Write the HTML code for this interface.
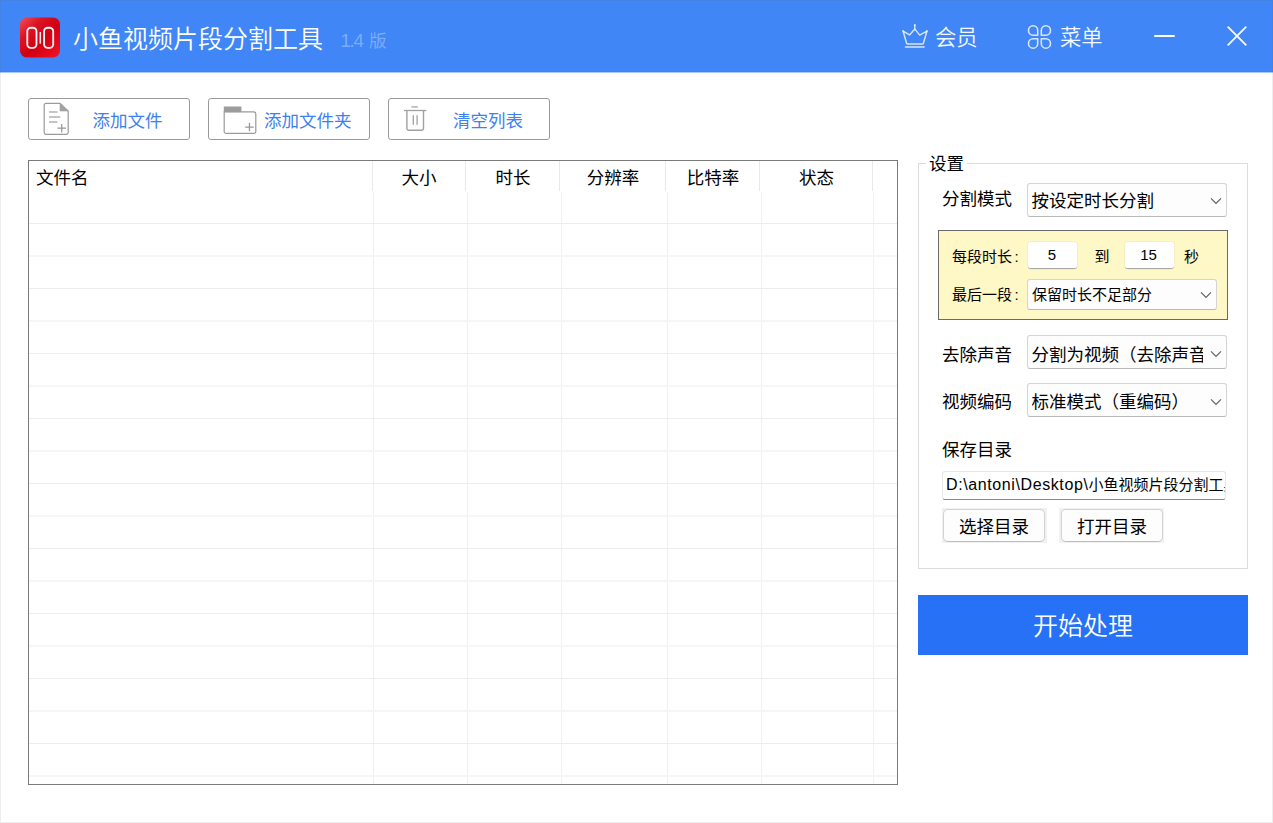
<!DOCTYPE html>
<html lang="zh-CN">
<head>
<meta charset="utf-8">
<title>小鱼视频片段分割工具</title>
<style>
html,body{margin:0;padding:0;}
body{width:1273px;height:823px;position:relative;overflow:hidden;background:#fff;
  font-family:"Liberation Sans","Noto Sans CJK SC",sans-serif;color:#000;}
.a{position:absolute;white-space:nowrap;}
svg{position:absolute;overflow:visible;}
/* window frame */
#frame{left:0;top:0;width:1271px;height:821px;border:1px solid rgba(100,100,100,.11);z-index:10;pointer-events:none;}
/* header */
#hdr{left:0;top:0;width:1273px;height:72px;background:#4086f6;}
#hdr .edge{left:0;top:71px;width:1273px;height:1px;background:#3c82f4;}
#hdr .edge2{left:0;top:72px;width:1273px;height:1px;background:#a9c8fb;}
#logo{left:20px;top:18px;transform:translateY(-.45px);width:40px;height:40px;border-radius:7px;
  background:linear-gradient(135deg,#f2505c 0%,#dc1424 28%,#d00012 55%,#e30a1c 80%,#f41426 100%);}
#title{left:73px;top:21px;height:36px;line-height:36px;font-size:25px;font-weight:350;color:#fff;}
#ver{left:340.5px;top:31px;height:20px;line-height:20px;font-size:17.6px;color:#7aacf9;}
#ver span{font-size:18.67px;letter-spacing:-1.3px;margin-right:6.5px;}
.hl{font-size:21.33px;font-weight:350;color:#f4f8ff;height:28px;line-height:28px;top:23.5px;}
/* toolbar */
.tb{top:97.6px;width:160px;height:40px;border:1px solid #9a9a9a;border-radius:3px;background:#fff;}
.tbt{top:106.5px;height:28px;line-height:28px;font-size:17.5px;color:#3d80f2;}
/* table */
#tbl{left:28px;top:160px;width:868px;height:623px;border:1px solid #7a7a7a;background:#fff;}
.th{top:164px;height:28px;line-height:28px;font-size:17.5px;color:#000;text-align:center;}
.hs{top:161px;width:1px;height:30px;background:#e9e9e9;}
.vs{top:192px;width:1px;height:592px;background:#f0f0f0;}
.rl{left:29px;width:868px;height:1px;background:#ededed;}
.rl.h{height:2px;background:#f6f6f6;}
/* settings */
#grp{left:918px;top:163px;width:328px;height:404px;border:1px solid #dcdcdc;}
#grpt{left:926px;top:150px;width:41px;height:28px;line-height:28px;font-size:17.5px;background:#fff;text-align:center;}
.lb{font-size:17.5px;height:28px;line-height:28px;left:942px;}
.cb{left:1027px;width:198px;height:32px;border:1px solid #d4d4d4;border-bottom-color:#b9b9b9;border-radius:3px;background:#fdfdfd;}
.ct{left:1031.5px;font-size:17.5px;height:28px;line-height:28px;overflow:hidden;}
#yb{left:938px;top:230px;width:288px;height:88px;border:1px solid #6a6a6a;background:#fef7c6;}
.sl{font-size:15px;height:24px;line-height:24px;}
.ni{top:241.5px;width:49px;height:26px;background:#fff;border-bottom:1px solid #a8a8a8;border-radius:3px;box-shadow:0 0 0 0.5px #ece6c0;}
.bt{top:509px;width:100px;height:31px;border:1px solid #d2d2d2;border-bottom-color:#bdbdbd;border-radius:5px;background:#fdfdfd;}
.btb{top:508px;width:105px;height:34.5px;background:#f1f1f1;}
.btt{top:513px;height:28px;line-height:28px;font-size:17.5px;width:102px;text-align:center;}
#start{left:918px;top:595px;width:330px;height:60px;background:#2671f5;}
#startt{left:918px;top:608px;width:330px;height:36px;line-height:36px;text-align:center;font-size:25px;font-weight:350;color:#fff;}
</style>
</head>
<body>
<div class="a" id="frame"></div>

<!-- ===== header ===== -->
<div class="a" id="hdr"><div class="a edge"></div><div class="a edge2"></div></div>
<div class="a" id="logo"></div>
<svg style="left:20px;top:17.55px" width="40" height="40" viewBox="0 0 40 40">
  <rect x="7.3" y="9.7" width="9.2" height="20.2" rx="3.6" fill="none" stroke="#fff" stroke-width="1.85" opacity=".95"/>
  <rect x="24.1" y="9.7" width="9.1" height="20.2" rx="3.6" fill="none" stroke="#fff" stroke-width="1.85" opacity=".95"/>
  <line x1="20.3" y1="14" x2="20.3" y2="25.7" stroke="#fff" stroke-width="1.6" opacity=".9"/>
</svg>
<div class="a" id="title">小鱼视频片段分割工具</div>
<div class="a" id="ver"><span>1.4</span>版</div>

<svg style="left:900px;top:22px" width="30" height="28" viewBox="0 0 30 28">
  <g fill="none" stroke="#fff" stroke-width="1.45" stroke-linejoin="round" stroke-linecap="round" opacity=".78">
    <path d="M3.1 9.2 L9.5 12.9 L14.8 6.9 L19.7 13.1 L26.9 9.2 L23.4 21.2 Q23.2 21.9 22.4 21.9 H7.6 Q6.8 21.9 6.6 21.2 Z"/>
    <path d="M14.8 2.9 V6.9"/>
    <path d="M5.4 24.9 H24.1"/>
  </g>
  <g fill="#fff" opacity=".55"><circle cx="3.1" cy="9.2" r="1.1"/><circle cx="26.9" cy="9.2" r="1.1"/><circle cx="14.8" cy="3.2" r="1.1"/></g>
</svg>
<div class="a hl" style="left:935px">会员</div>

<svg style="left:1026px;top:24px" width="28" height="26" viewBox="0 0 28 26">
  <g fill="none" stroke="#fff" stroke-width="1.6" stroke-linejoin="round" opacity=".8">
    <path d="M11.7 11.2 H7.1 A4.6 4.75 0 1 1 11.7 6.45 Z"/>
    <path d="M15.3 11.2 H19.9 A4.6 4.75 0 1 0 15.3 6.45 Z"/>
    <path d="M11.7 14.7 H7.1 A4.6 4.75 0 1 0 11.7 19.45 Z"/>
    <path d="M15.3 14.7 H19.9 A4.6 4.75 0 1 1 15.3 19.45 Z"/>
  </g>
</svg>
<div class="a hl" style="left:1060px">菜单</div>

<div class="a" style="left:1154px;top:35px;width:21px;height:2.4px;background:#fff;border-radius:1px"></div>
<svg style="left:1227px;top:26px" width="20" height="20" viewBox="0 0 20 20">
  <path d="M0.7 0.7 L19.3 19.3 M19.3 0.7 L0.7 19.3" stroke="#fff" stroke-width="1.9" fill="none" opacity=".95"/>
</svg>

<!-- ===== toolbar ===== -->
<div class="a tb" style="left:27.6px"></div>
<div class="a tb" style="left:207.6px"></div>
<div class="a tb" style="left:387.6px"></div>

<!-- add file icon -->
<svg style="left:43px;top:102px" width="27" height="34" viewBox="0 0 27 34">
  <path d="M3 1.3 H17 L25.2 9 V30.5 A1.8 1.8 0 0 1 23.5 32.3 H3 A1.8 1.8 0 0 1 1.2 30.5 V3.1 A1.8 1.8 0 0 1 3 1.3 Z" fill="#fff" stroke="#9a9a9a" stroke-width="1.2"/>
  <path d="M17 1.3 V9 H25.2 Z" fill="#a2a2a2" stroke="#a2a2a2" stroke-width=".6"/>
  <path d="M6 9.9 H14.5 M6 14.9 H17.2 M6 19.9 H14.5" stroke="#b2b2b2" stroke-width="1.5" fill="none"/>
  <path d="M14.5 26.2 H23 M18.75 22 V30.5" stroke="#979797" stroke-width="1.25" fill="none"/>
</svg>
<div class="a tbt" style="left:92.5px">添加文件</div>

<!-- add folder icon -->
<svg style="left:223px;top:105px" width="34" height="30" viewBox="0 0 34 30">
  <path d="M1.2 6.8 H30.6 A2.2 2.2 0 0 1 32.8 9 V26.6 A1.8 1.8 0 0 1 31 28.4 H3 A1.8 1.8 0 0 1 1.2 26.6 Z" fill="#fff" stroke="#9a9a9a" stroke-width="1.2"/>
  <rect x="0.8" y="1.5" width="17.6" height="5.6" fill="#9c9c9c"/>
  <path d="M22.2 22 H30.7 M26.45 17.7 V26.2" stroke="#979797" stroke-width="1.25" fill="none"/>
</svg>
<div class="a tbt" style="left:264px">添加文件夹</div>

<!-- trash icon -->
<svg style="left:403px;top:104px" width="26" height="28" viewBox="0 0 26 28">
  <path d="M8.4 2.9 H14.8" stroke="#b0b0b0" stroke-width="1.5" fill="none"/>
  <path d="M1 6.5 H23.4" stroke="#a0a0a0" stroke-width="1.3" fill="none"/>
  <path d="M3.9 6.5 V24.6 A1.7 1.7 0 0 0 5.6 26.3 H18.8 A1.7 1.7 0 0 0 20.5 24.6 V6.5" stroke="#a0a0a0" stroke-width="1.4" fill="none"/>
  <path d="M10.3 11.2 V20.8 M14.1 11.2 V20.8" stroke="#a0a0a0" stroke-width="1.3" fill="none"/>
</svg>
<div class="a tbt" style="left:453px">清空列表</div>

<!-- ===== table ===== -->
<div class="a" id="tbl"></div>
<div class="a th" style="left:36px;text-align:left">文件名</div>
<div class="a th" style="left:372px;width:94px">大小</div>
<div class="a th" style="left:466px;width:94px">时长</div>
<div class="a th" style="left:560px;width:106px">分辨率</div>
<div class="a th" style="left:666px;width:94px">比特率</div>
<div class="a th" style="left:760px;width:113px">状态</div>

<div class="a hs" style="left:372px"></div>
<div class="a hs" style="left:465px"></div>
<div class="a hs" style="left:559px"></div>
<div class="a hs" style="left:665px"></div>
<div class="a hs" style="left:759px"></div>
<div class="a hs" style="left:872px"></div>

<div class="a vs" style="left:373px"></div>
<div class="a vs" style="left:467px"></div>
<div class="a vs" style="left:561px"></div>
<div class="a vs" style="left:667px"></div>
<div class="a vs" style="left:761px"></div>
<div class="a vs" style="left:873px"></div>


<div class="a rl" style="top:223px"></div>
<div class="a rl h" style="top:255px"></div>
<div class="a rl" style="top:288px"></div>
<div class="a rl h" style="top:320px"></div>
<div class="a rl" style="top:353px"></div>
<div class="a rl h" style="top:385px"></div>
<div class="a rl" style="top:418px"></div>
<div class="a rl h" style="top:450px"></div>
<div class="a rl" style="top:483px"></div>
<div class="a rl h" style="top:515px"></div>
<div class="a rl" style="top:548px"></div>
<div class="a rl h" style="top:580px"></div>
<div class="a rl" style="top:613px"></div>
<div class="a rl h" style="top:645px"></div>
<div class="a rl" style="top:678px"></div>
<div class="a rl h" style="top:710px"></div>
<div class="a rl" style="top:743px"></div>
<div class="a rl h" style="top:775px"></div>

<!-- ===== settings ===== -->
<div class="a" id="grp"></div>
<div class="a" id="grpt">设置</div>

<div class="a lb" style="top:185px">分割模式</div>
<div class="a cb" style="top:183px"></div>
<div class="a ct" style="top:187px">按设定时长分割</div>
<svg style="left:1210px;top:197px" width="12" height="8" viewBox="0 0 12 8"><path d="M1 1.4 L6 6.4 L11 1.4" fill="none" stroke="#5c5c5c" stroke-width="1.1"/></svg>

<div class="a" id="yb"></div>
<div class="a sl" style="left:952px;top:245px">每段时长<span style="margin-left:2.5px">:</span></div>
<div class="a ni" style="left:1027.5px"></div>
<div class="a sl" style="left:1027.5px;top:242.5px;width:49px;text-align:center">5</div>
<div class="a sl" style="left:1094.5px;top:245px">到</div>
<div class="a ni" style="left:1125px"></div>
<div class="a sl" style="left:1124px;top:242.5px;width:49px;text-align:center">15</div>
<div class="a sl" style="left:1184px;top:245px">秒</div>
<div class="a sl" style="left:952px;top:283px">最后一段<span style="margin-left:2.5px">:</span></div>
<div class="a cb" style="top:279px;width:188px;height:29px"></div>
<div class="a sl" style="left:1032px;top:283px">保留时长不足部分</div>
<svg style="left:1200px;top:291px" width="12" height="8" viewBox="0 0 12 8"><path d="M1 1.4 L6 6.4 L11 1.4" fill="none" stroke="#5c5c5c" stroke-width="1.1"/></svg>

<div class="a lb" style="top:341px">去除声音</div>
<div class="a cb" style="top:335px"></div>
<div class="a ct" style="top:341px;width:171px">分割为视频（去除声音）</div>
<svg style="left:1210px;top:350px" width="12" height="8" viewBox="0 0 12 8"><path d="M1 1.4 L6 6.4 L11 1.4" fill="none" stroke="#5c5c5c" stroke-width="1.1"/></svg>

<div class="a lb" style="top:388px">视频编码</div>
<div class="a cb" style="top:383px"></div>
<div class="a ct" style="top:388px">标准模式（重编码）</div>
<svg style="left:1210px;top:398px" width="12" height="8" viewBox="0 0 12 8"><path d="M1 1.4 L6 6.4 L11 1.4" fill="none" stroke="#5c5c5c" stroke-width="1.1"/></svg>

<div class="a lb" style="top:436px">保存目录</div>
<div class="a" style="left:942px;top:471px;width:284px;height:29px;background:#fff;border:1px solid #e6e6e6;border-bottom:1px solid #8a8a8a;border-radius:3px;box-sizing:border-box"></div>
<div class="a" style="left:946px;top:473px;width:278.5px;height:24px;line-height:24px;overflow:hidden;font-size:15px"><span style="font-size:16px;letter-spacing:.6px">D:\antoni\Desktop\</span>小鱼视频片段分割工具</div>

<div class="a btb" style="left:942px"></div>
<div class="a bt" style="left:943px"></div>
<div class="a btt" style="left:943px">选择目录</div>
<div class="a btb" style="left:1059px"></div>
<div class="a bt" style="left:1061px"></div>
<div class="a btt" style="left:1061px">打开目录</div>

<!-- ===== start ===== -->
<div class="a" id="start"></div>
<div class="a" id="startt">开始处理</div>
</body>
</html>
